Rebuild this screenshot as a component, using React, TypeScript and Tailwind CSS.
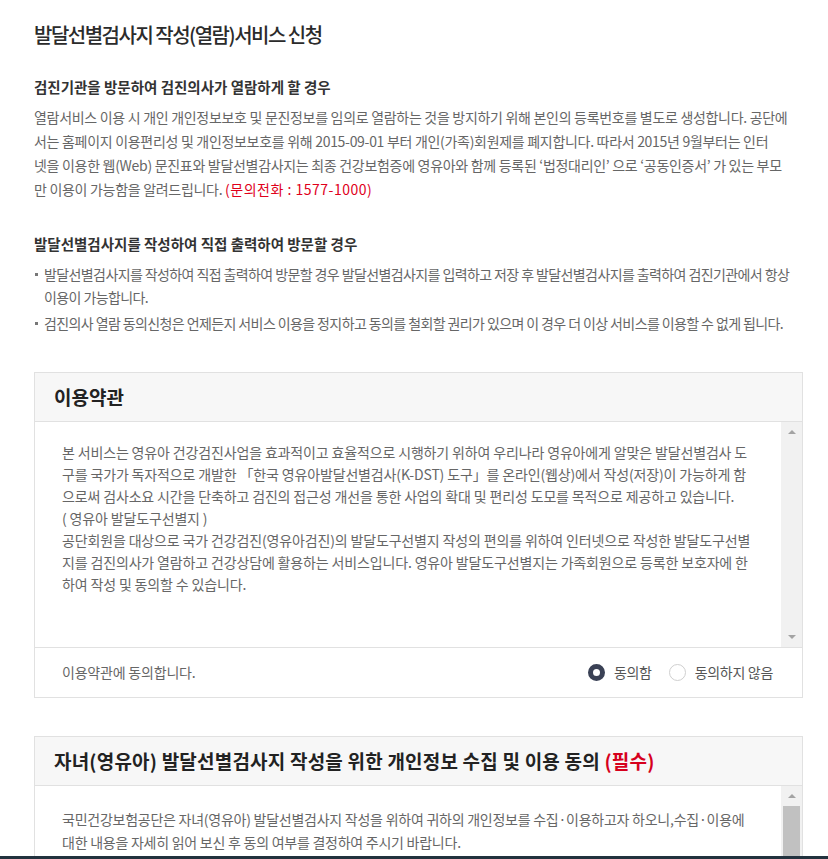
const font = { fontFamily: '"Noto Sans CJK KR", "Noto Sans", sans-serif' };

function ScrollTrack({ thumb }: { thumb?: boolean }) {
  return (
    <div className="flex w-[21px] shrink-0 flex-col items-center bg-[#f1f1f1]">
      <div className="flex h-[20px] w-full items-center justify-center">
        <span className="h-0 w-0 border-x-[4px] border-b-[4px] border-x-transparent border-b-[#a3a3a3]" />
      </div>
      {thumb ? <div className="w-[17px] flex-1 bg-[#c1c1c1]" /> : <div className="flex-1" />}
      {!thumb && (
        <div className="flex h-[20px] w-full items-center justify-center">
          <span className="h-0 w-0 border-x-[4px] border-t-[4px] border-x-transparent border-t-[#a3a3a3]" />
        </div>
      )}
    </div>
  );
}

function Radio({ checked, label }: { checked?: boolean; label: string }) {
  return (
    <label className="flex items-center gap-[9px] text-[14px] tracking-[-0.3px] text-[#555]">
      {checked ? (
        <span className="h-[17px] w-[17px] rounded-full border-[5px] border-[#3a4155] bg-white" />
      ) : (
        <span className="h-[17px] w-[17px] rounded-full border border-[#cfcfcf] bg-white" />
      )}
      {label}
    </label>
  );
}

function Bullet({ children }: { children: React.ReactNode }) {
  return (
    <li className="flex">
      <span className="flex h-[23px] w-[10px] shrink-0 items-center pl-[1px]">
        <span className="h-[3px] w-[3px] bg-[#777]" />
      </span>
      <span className="whitespace-nowrap">{children}</span>
    </li>
  );
}

export default function App() {
  return (
    <div className="min-h-screen bg-white pb-10 pl-[34px] pr-[25px] pt-[22px] text-[#333]" style={font}>
      {/* page title */}
      <h1 className="text-[20px] font-medium leading-[26px] tracking-[-1.5px] text-[#2b2b2b]">
        발달선별검사지 작성(열람)서비스 신청
      </h1>

      <h2 className="mt-[28px] text-[14.5px] font-bold leading-[22px] text-[#333]">
        검진기관을 방문하여 검진의사가 열람하게 할 경우
      </h2>
      <p className="mt-[7px] whitespace-nowrap text-[14px] leading-[24px] tracking-[-0.3px] text-[#666]">
        열람서비스 이용 시 개인 개인정보보호 및 문진정보를 임의로 열람하는 것을 방지하기 위해 본인의 등록번호를 별도로 생성합니다. 공단에
        <br />
        서는 홈페이지 이용편리성 및 개인정보보호를 위해 2015-09-01 부터 개인(가족)회원제를 폐지합니다. 따라서 2015년 9월부터는 인터
        <br />
        넷을 이용한 웹(Web) 문진표와 발달선별감사지는 최종 건강보험증에 영유아와 함께 등록된 ‘법정대리인’ 으로 ‘공동인증서’ 가 있는 부모
        <br />
        만 이용이 가능함을 알려드립니다.{' '}
        <span className="tracking-[0.5px] text-[#e0001b]">(문의전화 : 1577-1000)</span>
      </p>

      <h2 className="mt-[32px] text-[14.5px] font-bold leading-[22px] text-[#333]">
        발달선별검사지를 작성하여 직접 출력하여 방문할 경우
      </h2>
      <ul className="mt-[8px] flex flex-col gap-[3px] text-[14px] leading-[23px] tracking-[-0.6px] text-[#666]">
        <Bullet>
          발달선별검사지를 작성하여 직접 출력하여 방문할 경우 발달선별검사지를 입력하고 저장 후 발달선별검사지를 출력하여 검진기관에서 항상
          <br />
          이용이 가능합니다.
        </Bullet>
        <Bullet>
          검진의사 열람 동의신청은 언제든지 서비스 이용을 정지하고 동의를 철회할 권리가 있으며 이 경우 더 이상 서비스를 이용할 수 없게 됩니다.
        </Bullet>
      </ul>

      {/* terms box */}
      <section className="mt-[37px] border border-[#e1e1e1]">
        <div className="flex h-[49px] items-center border-b border-[#e1e1e1] bg-[#f7f7f7] px-[19px]">
          <h3 className="text-[19px] font-bold text-[#222]">이용약관</h3>
        </div>
        <div className="flex h-[225px]">
          <div className="flex-1 whitespace-nowrap pl-[27px] pt-[19px] text-[14px] leading-[22px] tracking-[-0.15px] text-[#666]">
            본 서비스는 영유아 건강검진사업을 효과적이고 효율적으로 시행하기 위하여 우리나라 영유아에게 알맞은 발달선별검사 도
            <br />
            구를 국가가 독자적으로 개발한 「한국 영유아발달선별검사(K-DST) 도구」를 온라인(웹상)에서 작성(저장)이 가능하게 함
            <br />
            으로써 검사소요 시간을 단축하고 검진의 접근성 개선을 통한 사업의 확대 및 편리성 도모를 목적으로 제공하고 있습니다.
            <br />( 영유아 발달도구선별지 )
            <br />
            공단회원을 대상으로 국가 건강검진(영유아검진)의 발달도구선별지 작성의 편의를 위하여 인터넷으로 작성한 발달도구선별
            <br />
            지를 검진의사가 열람하고 건강상담에 활용하는 서비스입니다. 영유아 발달도구선별지는 가족회원으로 등록한 보호자에 한
            <br />
            하여 작성 및 동의할 수 있습니다.
          </div>
          <ScrollTrack />
        </div>
        <div className="flex h-[50px] items-center justify-between border-t border-[#e1e1e1] pl-[27px] pr-[29px]">
          <span className="text-[14px] tracking-[-0.2px] text-[#666]">이용약관에 동의합니다.</span>
          <div className="flex items-center gap-[17px]">
            <Radio checked label="동의함" />
            <Radio label="동의하지 않음" />
          </div>
        </div>
      </section>

      {/* personal info box */}
      <section className="mt-[38px] border border-[#e1e1e1]">
        <div className="flex h-[49px] items-center border-b border-[#e1e1e1] bg-[#f7f7f7] px-[19px]">
          <h3 className="text-[19px] font-bold tracking-[0.2px] text-[#222]">
            자녀(영유아) 발달선별검사지 작성을 위한 개인정보 수집 및 이용 동의{' '}
            <span className="text-[#d6001c]">(필수)</span>
          </h3>
        </div>
        <div className="flex h-[225px]">
          <div className="flex-1 whitespace-nowrap pl-[27px] pt-[22px] text-[14px] leading-[23px] tracking-[-0.25px] text-[#666]">
            국민건강보험공단은 자녀(영유아) 발달선별검사지 작성을 위하여 귀하의 개인정보를 수집·이용하고자 하오니,수집·이용에
            <br />
            대한 내용을 자세히 읽어 보신 후 동의 여부를 결정하여 주시기 바랍니다.
          </div>
          <ScrollTrack thumb />
        </div>
      </section>

      <div className="fixed inset-x-0 bottom-0 h-[3px] bg-[#22323e]" />
    </div>
  );
}
